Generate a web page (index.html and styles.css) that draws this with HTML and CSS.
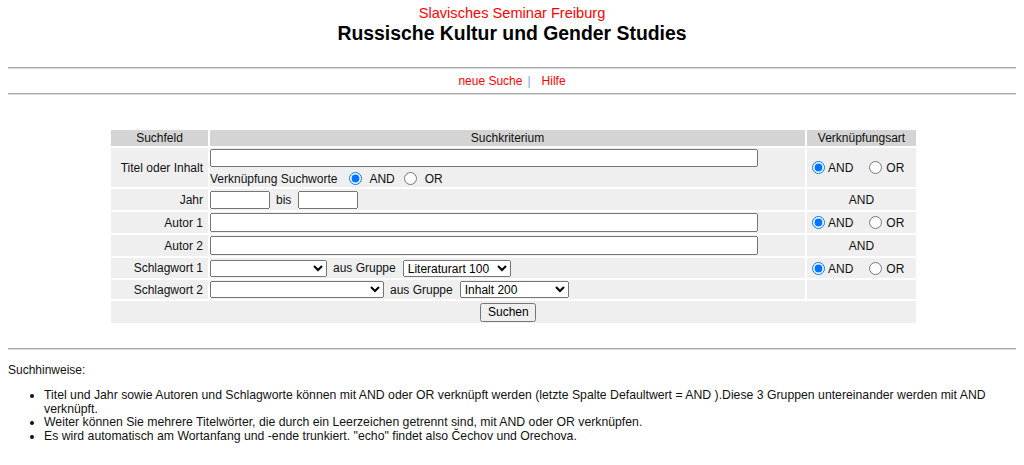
FILE: index.html
```html
<!DOCTYPE html>
<html lang="de">
<head>
<meta charset="utf-8">
<title>Russische Kultur und Gender Studies</title>
<link rel="stylesheet" href="styles.css">
</head>
<body>
<header class="masthead">
  <div class="seminar">Slavisches Seminar Freiburg</div>
  <h1 class="title">Russische Kultur und Gender Studies</h1>
</header>
<hr class="rule rule-top">
<nav class="nav"><a class="navlink" href="#">neue Suche</a><span class="sep">|</span><a class="navlink" href="#">Hilfe</a></nav>
<hr class="rule rule-nav">
<form class="search" action="#">
<table class="grid">
  <colgroup><col class="c1"><col class="c2"><col class="c3"></colgroup>
  <tr class="head"><th>Suchfeld</th><th>Suchkriterium</th><th>Verknüpfungsart</th></tr>
  <tr class="r-titel">
    <td class="label">Titel oder Inhalt</td>
    <td class="field field-titel"><input type="text" class="txt wide"><div class="sw-line"><span class="sw-label">Verknüpfung Suchworte</span><input type="radio" name="sw" class="rad t-and" checked><span class="opt">AND</span><input type="radio" name="sw" class="rad t-or"><span class="opt">OR</span></div></td>
    <td class="op"><input type="radio" name="o1" class="rad v-and" checked><span class="opt">AND</span><input type="radio" name="o1" class="rad v-or"><span class="opt">OR</span></td>
  </tr>
  <tr class="r-jahr">
    <td class="label">Jahr</td>
    <td class="field"><input type="text" class="txt year"><span class="bis">bis</span><input type="text" class="txt year"></td>
    <td class="op fixed">AND</td>
  </tr>
  <tr class="r-autor1">
    <td class="label">Autor 1</td>
    <td class="field"><input type="text" class="txt wide tall"></td>
    <td class="op"><input type="radio" name="o2" class="rad v-and" checked><span class="opt">AND</span><input type="radio" name="o2" class="rad v-or"><span class="opt">OR</span></td>
  </tr>
  <tr class="r-autor2">
    <td class="label">Autor 2</td>
    <td class="field"><input type="text" class="txt wide tall"></td>
    <td class="op fixed">AND</td>
  </tr>
  <tr class="r-sw1">
    <td class="label">Schlagwort 1</td>
    <td class="field"><select class="sel sel-sw1"><option></option></select><span class="grp">aus Gruppe</span><select class="sel sel-g1"><option>Literaturart 100</option></select></td>
    <td class="op"><input type="radio" name="o3" class="rad v-and" checked><span class="opt">AND</span><input type="radio" name="o3" class="rad v-or"><span class="opt">OR</span></td>
  </tr>
  <tr class="r-sw2">
    <td class="label">Schlagwort 2</td>
    <td class="field"><select class="sel sel-sw2"><option></option></select><span class="grp">aus Gruppe</span><select class="sel sel-g2"><option>Inhalt 200</option></select></td>
    <td class="op"></td>
  </tr>
  <tr class="r-submit">
    <td class="submit" colspan="3"><button type="button" class="btn">Suchen</button></td>
  </tr>
</table>
</form>
<hr class="rule rule-bottom">
<div class="hints-title">Suchhinweise:</div>
<ul class="hints">
  <li class="hint-first">Titel und Jahr sowie Autoren und Schlagworte können mit AND oder OR verknüpft werden (letzte Spalte Defaultwert = AND ).Diese 3 Gruppen untereinander werden mit AND verknüpft.<svg class="arrow" width="8" height="10" viewBox="0 0 8 10"><path d="M1.2 5 L5.2 1.3 V3.4 H9 V6.6 H5.2 V8.7 Z" fill="#fff" stroke="#222" stroke-width="1.4" stroke-linejoin="round"/></svg></li>
  <li>Weiter können Sie mehrere Titelwörter, die durch ein Leerzeichen getrennt sind, mit AND oder OR verknüpfen.</li>
  <li>Es wird automatisch am Wortanfang und -ende trunkiert. "echo" findet also Čechov und Orechova.</li>
</ul>
</body>
</html>
```

FILE: styles.css
```css
html, body {
  background: #fff;
}
body {
  margin: 0 8px;
  font-family: "Liberation Sans", Arial, sans-serif;
  font-size: 12px;
  color: #111;
}
.masthead {
  padding-top: 5px;
  text-align: center;
}
.seminar {
  color: #f00;
  font-size: 14.6px;
  line-height: 17px;
}
.title {
  margin: 0;
  font-size: 19.4px;
  line-height: 23px;
  font-weight: bold;
  color: #000;
}
.rule {
  margin: 0;
  border: 0;
  border-top: 1px solid #a8a8a8;
  border-bottom: 1px solid #dcdcdc;
  height: 0;
}
.rule-top { margin-top: 22px; }
.rule-nav { margin-top: 5px; }
.rule-bottom { margin-top: 23px; }
.nav {
  margin-top: 5px;
  text-align: center;
  line-height: 14px;
}
.navlink {
  color: #f00;
  text-decoration: none;
}
.sep {
  color: #7aa6d6;
  margin: 0 11px 0 5px;
}
.search {
  margin: 33px 0 0 101px;
}
.grid {
  width: 809px;
  table-layout: fixed;
  border-collapse: separate;
  border-spacing: 2px;
  font-size: 12px;
}
.c1 { width: 97px; }
.c2 { width: 595px; }
.c3 { width: 109px; }
.grid th {
  background: #d4d4d4;
  font-weight: normal;
  padding: 0 1px;
  height: 16px;
  line-height: 14px;
  color: #111;
}
.grid td {
  background: #efefef;
  padding: 0 1px;
  vertical-align: middle;
  line-height: 14px;
}
.grid td.field { padding-left: 0; }
.r-titel td { height: 38px; }
.r-jahr td { height: 21px; }
.r-autor1 td { height: 21px; }
.r-autor2 td { height: 21px; }
.r-sw1 td { height: 20px; }
.r-sw2 td { height: 19px; }
.r-submit td { height: 22px; }
.grid td.field-titel {
  vertical-align: top;
  padding-top: 1px;
}
.sw-line {
  margin-top: 3px;
  line-height: 16px;
  height: 16px;
  white-space: nowrap;
}
.grid td.label {
  text-align: right;
  padding-right: 5px;
}
.grid td.op {
  white-space: nowrap;
}
.grid td.fixed {
  text-align: center;
}
.txt {
  box-sizing: border-box;
  height: 18px;
  padding: 1px 2px;
  margin: 0;
  font: 12px "Liberation Sans", Arial, sans-serif;
  vertical-align: middle;
}
.wide { width: 548px; }
.tall { height: 19px; }
.year { width: 60px; }
.bis { margin: 0 7px 0 6px; vertical-align: middle; }
.field-titel .txt { display: block; }
.sw-label { vertical-align: middle; }
.rad {
  width: 13px;
  height: 13px;
  margin: 0;
  vertical-align: middle;
}
.opt { vertical-align: middle; }
.t-and { margin: 0 7px 0 12px; }
.t-or { margin: 0 8px 0 9px; }
.v-and { margin: 0 3px 0 4px; }
.v-or { margin: 0 4px 0 16px; }
.sel {
  box-sizing: border-box;
  height: 17px;
  margin: 0;
  font: 12px "Liberation Sans", Arial, sans-serif;
  vertical-align: middle;
}
.sel-sw1 { width: 117px; }
.sel-sw2 { width: 174px; }
.sel-g1 { width: 108px; }
.sel-g2 { width: 109px; }
.grp { margin: 0 7px 0 6px; vertical-align: middle; }
.grid td.submit {
  text-align: center;
  padding-right: 12px;
}
.btn {
  box-sizing: border-box;
  width: 56px;
  height: 19px;
  padding: 0 6px;
  margin: 0;
  font: 12px "Liberation Sans", Arial, sans-serif;
  vertical-align: middle;
}
.hints-title {
  margin-top: 13px;
  line-height: 14px;
}
.hints {
  margin: 12px -8px 0 0;
  padding-left: 36px;
}
.hints li {
  font-size: 12.25px;
  line-height: 13.7px;
}
.hint-first {
  position: relative;
}
.arrow {
  position: absolute;
  top: 3px;
  right: 0;
  display: block;
}
```
